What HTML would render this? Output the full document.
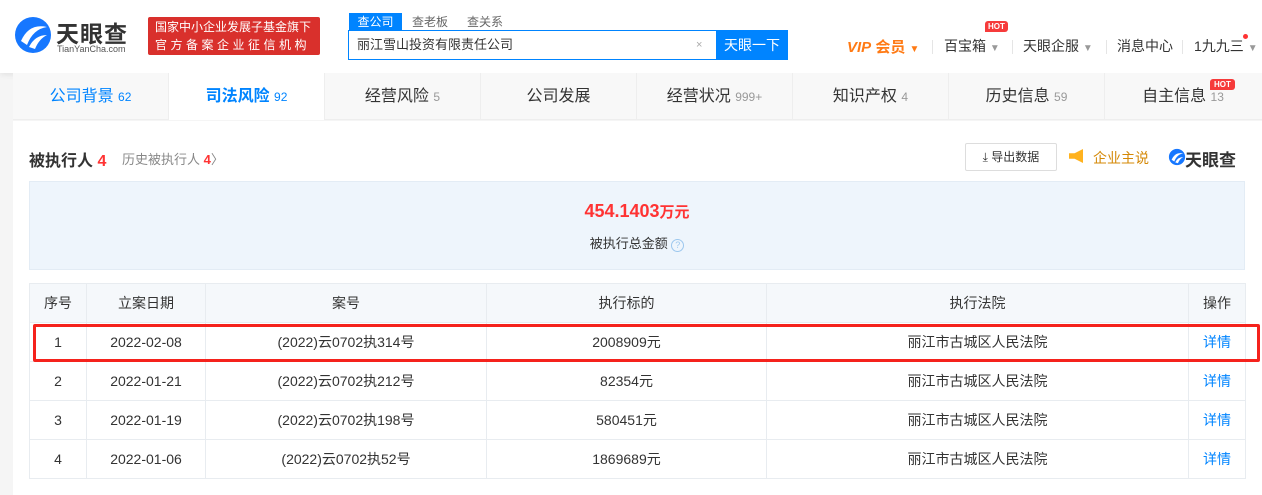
<!DOCTYPE html>
<html><head><meta charset="utf-8"><style>
*{margin:0;padding:0;box-sizing:border-box}
body{width:1262px;height:495px;overflow:hidden;background:#f5f5f5;font-family:"Liberation Sans","Noto Sans CJK SC",sans-serif;color:#333;font-size:14px;position:relative}
.hdr{position:absolute;left:0;top:0;width:1262px;height:73px;background:#fff;box-shadow:0 2px 6px rgba(0,0,0,.08)}
.abs{position:absolute}
.tabs{position:absolute;left:13px;top:73px;width:1249px;height:47px;background:#f8f8f8;border-bottom:1px solid #eee;display:flex}
.tab{width:156px;height:47px;line-height:47px;text-align:center;font-size:16px;color:#333;border-right:1px solid #eee}
.tab small{font-size:12px;color:#999}
.main{position:absolute;left:13px;top:121px;width:1249px;height:374px;background:#fff}
table{position:absolute;left:29px;top:283px;border-collapse:collapse;font-size:14px}
td,th{border:1px solid #e8ecf0;text-align:center;height:39px;font-weight:normal}
th{background:#f5f8fb;color:#333}
a{color:#0084ff;text-decoration:none}
</style></head><body>
<div class="hdr">
 <svg class="abs" style="left:13px;top:15px" width="40" height="40" viewBox="0 0 40 40"><circle cx="20" cy="20" r="18" fill="#1677ff"/><path d="M8 26 Q16 8 34 12 Q20 14 14 30 Z" fill="#fff"/><path d="M16 32 Q22 20 34 20 Q26 24 22 34Z" fill="#fff"/></svg>
 <div class="abs" style="left:56px;top:15px;font-size:23px;font-weight:bold;color:#333;letter-spacing:1px">天眼查</div>
 <div class="abs" style="left:57px;top:44px;font-size:9px;color:#555">TianYanCha.com</div>
 <div class="abs" style="left:148px;top:17px;width:172px;height:38px;background:#d9302c;border-radius:2px;color:#fff;font-size:12px;line-height:18px;padding:1px 0 0 7px">国家中小企业发展子基金旗下<br><span style="letter-spacing:3.5px">官方备案企业征信机构</span></div>
 <div class="abs" style="left:349px;top:13px;width:53px;height:18px;background:#0084ff;color:#fff;font-size:12px;text-align:center;line-height:18px">查公司</div>
 <div class="abs" style="left:412px;top:13px;font-size:12px;color:#666;line-height:18px">查老板</div>
 <div class="abs" style="left:467px;top:13px;font-size:12px;color:#666;line-height:18px">查关系</div>
 <div class="abs" style="left:348px;top:30px;width:370px;height:30px;border:1px solid #0084ff;background:#fff;font-size:13px;line-height:28px;padding-left:8px">丽江雪山投资有限责任公司<span style="position:absolute;left:347px;top:0;color:#aaa;font-size:11px">×</span></div>
 <div class="abs" style="left:716px;top:30px;width:72px;height:30px;background:#0084ff;color:#fff;font-size:14px;text-align:center;line-height:30px">天眼一下</div>
 <div class="abs" style="left:847px;top:36px;font-size:15px;font-weight:bold;color:#ff7a14;font-style:italic">VIP<span style="font-style:normal"> 会员</span> <span style="font-size:10px">▼</span></div>
 <div class="abs" style="left:932px;top:40px;width:1px;height:14px;background:#e5e5e5"></div>
 <div class="abs" style="left:944px;top:36px;font-size:14px">百宝箱 <span style="font-size:10px;color:#999">▼</span></div>
 <div class="abs" style="left:985px;top:21px;background:#f63b3b;color:#fff;font-size:8px;font-weight:bold;padding:1px 3px;border-radius:3px 3px 3px 0">HOT</div>
 <div class="abs" style="left:1012px;top:40px;width:1px;height:14px;background:#e5e5e5"></div>
 <div class="abs" style="left:1023px;top:36px;font-size:14px">天眼企服 <span style="font-size:10px;color:#999">▼</span></div>
 <div class="abs" style="left:1106px;top:40px;width:1px;height:14px;background:#e5e5e5"></div>
 <div class="abs" style="left:1117px;top:36px;font-size:14px">消息中心</div>
 <div class="abs" style="left:1182px;top:40px;width:1px;height:14px;background:#e5e5e5"></div>
 <div class="abs" style="left:1194px;top:36px;font-size:14px">1九九三 <span style="font-size:10px;color:#999">▼</span></div>
 <div class="abs" style="left:1243px;top:34px;width:5px;height:5px;border-radius:50%;background:#f33"></div>
</div>
<div class="tabs">
 <div class="tab" style="color:#0084ff">公司背景 <small style="color:#0084ff">62</small></div>
 <div class="tab" style="background:#fff;color:#0084ff;font-weight:bold">司法风险 <small style="color:#0084ff;font-weight:normal">92</small></div>
 <div class="tab">经营风险 <small>5</small></div>
 <div class="tab">公司发展</div>
 <div class="tab">经营状况 <small>999+</small></div>
 <div class="tab">知识产权 <small>4</small></div>
 <div class="tab">历史信息 <small>59</small></div>
 <div class="tab" style="border:none">自主信息 <small>13</small></div>
</div>
<div class="abs" style="left:1210px;top:79px;background:#f63b3b;color:#fff;font-size:8px;font-weight:bold;padding:1px 4px;border-radius:3px 3px 3px 0">HOT</div>
<div class="main"></div>
<div class="abs" style="left:29px;top:147px;font-size:16px;font-weight:bold">被执行人 <span style="color:#f33">4</span></div>
<div class="abs" style="left:122px;top:149px;font-size:13px;color:#888">历史被执行人 <b style="color:#f33">4</b>〉</div>
<div class="abs" style="left:965px;top:143px;width:92px;height:28px;border:1px solid #ddd;border-radius:2px;font-size:12px;line-height:26px;text-align:center">⤓ 导出数据</div>
<div class="abs" style="left:1069px;top:149px;width:14px;height:14px;background:#ffb21e;clip-path:polygon(0 30%,40% 30%,100% 0,100% 100%,40% 70%,0 70%)"></div>
<div class="abs" style="left:1093px;top:148px;font-size:14px;color:#d48806">企业主说</div>
<svg class="abs" style="left:1168px;top:148px" width="18" height="18" viewBox="0 0 40 40"><circle cx="20" cy="20" r="18" fill="#1677ff"/><path d="M8 26 Q16 8 34 12 Q20 14 14 30 Z" fill="#fff"/><path d="M16 32 Q22 20 34 20 Q26 24 22 34Z" fill="#fff"/></svg>
<div class="abs" style="left:1185px;top:146px;font-size:17px;font-weight:bold;color:#333">天眼查</div>
<div class="abs" style="left:29px;top:181px;width:1216px;height:89px;background:#eef5fc;border:1px solid #e3ecf5"></div>
<div class="abs" style="left:29px;top:201px;width:1216px;text-align:center;font-size:18px;font-weight:bold;color:#f33">454.1403<span style="font-size:15px">万元</span></div>
<div class="abs" style="left:29px;top:233px;width:1216px;text-align:center;font-size:13px">被执行总金额 <span style="display:inline-block;width:13px;height:13px;border:1px solid #9cc7ee;border-radius:50%;font-size:9px;line-height:11px;color:#9cc7ee">?</span></div>
<table>
<tr><th style="width:57px">序号</th><th style="width:119px">立案日期</th><th style="width:281px">案号</th><th style="width:280px">执行标的</th><th style="width:422px">执行法院</th><th style="width:57px">操作</th></tr>
<tr><td>1</td><td>2022-02-08</td><td>(2022)云0702执314号</td><td>2008909元</td><td>丽江市古城区人民法院</td><td><a>详情</a></td></tr>
<tr><td>2</td><td>2022-01-21</td><td>(2022)云0702执212号</td><td>82354元</td><td>丽江市古城区人民法院</td><td><a>详情</a></td></tr>
<tr><td>3</td><td>2022-01-19</td><td>(2022)云0702执198号</td><td>580451元</td><td>丽江市古城区人民法院</td><td><a>详情</a></td></tr>
<tr><td>4</td><td>2022-01-06</td><td>(2022)云0702执52号</td><td>1869689元</td><td>丽江市古城区人民法院</td><td><a>详情</a></td></tr>
</table>
<div class="abs" style="left:33px;top:324px;width:1227px;height:38px;border:3px solid #f5221c;border-radius:2px"></div>
</body></html>
